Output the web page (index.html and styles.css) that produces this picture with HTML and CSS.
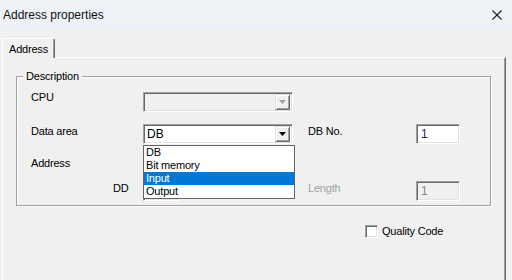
FILE: index.html
```html
<!DOCTYPE html>
<html lang="en">
<head>
    <meta charset="UTF-8">
    <title>Address properties</title>
    <link rel="stylesheet" href="styles.css">
</head>
<body>

    <div class="window">
        <div class="titlebar">
            <span class="title">Address properties</span>
            <svg class="close" width="10" height="10" viewBox="0 0 10 10">
                <path d="M0.5 0.5 L9.5 9.5 M9.5 0.5 L0.5 9.5" stroke="#1a1a1a" stroke-width="1.1" fill="none"/>
            </svg>
        </div>

        <div class="client">
            <div class="tabs">
                <div class="tab">Address</div>
            </div>

            <div class="tab-page">
                <div class="group">
                    <span class="group-caption">Description</span>

                    <div class="row row-cpu">
                        <span class="label">CPU</span>
                        <div class="combo combo-disabled">
                            <span class="combo-text"></span>
                            <span class="combo-btn">
                                <svg width="7" height="4" viewBox="0 0 7 4"><path d="M0 0 H7 L3.5 4 Z" fill="#a0a0a0"/></svg>
                            </span>
                        </div>
                    </div>

                    <div class="row row-area">
                        <span class="label">Data area</span>
                        <div class="combo">
                            <span class="combo-text">DB</span>
                            <span class="combo-btn">
                                <svg width="7" height="4" viewBox="0 0 7 4"><path d="M0 0 H7 L3.5 4 Z" fill="#000"/></svg>
                            </span>
                            <ul class="combo-list">
                                <li>DB</li>
                                <li>Bit memory</li>
                                <li class="selected">Input</li>
                                <li>Output</li>
                            </ul>
                        </div>
                        <span class="label label-right">DB No.</span>
                        <div class="edit">1</div>
                    </div>

                    <div class="row row-address">
                        <span class="label">Address</span>
                    </div>

                    <div class="row row-dd">
                        <span class="label label-dd">DD</span>
                        <div class="cell">
                            <div class="edit edit-address"></div>
                        </div>
                        <span class="label label-right label-disabled">Length</span>
                        <div class="edit edit-disabled">1</div>
                    </div>
                </div>

                <div class="check">
                    <span class="check-box"></span>
                    <span class="check-text">Quality Code</span>
                </div>
            </div>
        </div>
    </div>

</body>
</html>
```

FILE: styles.css
```css
* {
    box-sizing: border-box;
}

body {
    margin: 0;
    width: 512px;
    height: 280px;
    overflow: hidden;
    font-family: 'Liberation Sans', Arial, sans-serif;
    font-size: 11px;
    letter-spacing: -0.2px;
    color: #000;
    background: #f0f0f0;
}

.window {
    display: flex;
    flex-direction: column;
    height: 100%;
}

.titlebar {
    display: flex;
    align-items: center;
    justify-content: space-between;
    height: 29px;
    padding: 0 10px 0 3px;
    background: #eef2f6;
}

.title {
    font-size: 12px;
    letter-spacing: 0;
    color: #111;
}

.close {
    display: block;
    margin-top: 1px;
}

.client {
    flex: 1;
    display: flex;
    flex-direction: column;
    background: #f0f0f0;
}

.tabs {
    display: flex;
    padding: 9px 0 0 2px;
}

.tab {
    position: relative;
    z-index: 1;
    width: 53px;
    height: 20px;
    margin-bottom: -1px;
    padding: 4px 0 0 6px;
    line-height: 13px;
    background: #f0f0f0;
    border-top: 1px solid #fff;
    border-left: 1px solid #fff;
    border-right: 1px solid #696969;
    border-radius: 2px 2px 0 0;
    box-shadow: inset -1px 0 0 #a0a0a0;
}

.tab-page {
    flex: 1;
    margin-left: 2px;
    width: 504px;
    border-top: 1px solid #fff;
    border-left: 1px solid #fff;
    border-right: 1px solid #696969;
    box-shadow: inset -1px 0 0 #a0a0a0;
}

/* group box */
.group {
    position: relative;
    width: 475px;
    height: 130px;
    margin: 18px 0 0 13px;
    padding: 15px 0 0 14px;
    border: 1px solid #a0a0a0;
    box-shadow: inset 1px 1px 0 #fff, 1px 1px 0 #fff;
}

.group-caption {
    position: absolute;
    top: -8px;
    left: 6px;
    padding: 0 3px;
    line-height: 14px;
    background: #f0f0f0;
}

.row {
    display: flex;
    align-items: flex-start;
    height: 20px;
}

.row-area {
    margin-top: 12px;
}

.row-address {
    height: 13px;
    margin-top: 13px;
}

.row-dd {
    margin-top: 11px;
}

.label {
    width: 112px;
    line-height: 13px;
}

.row-cpu .label {
    margin-top: -1px;
}

.row-area .label,
.row-dd .label {
    margin-top: 1px;
}

.label-dd {
    padding-left: 82px;
}

.label-right {
    width: 108px;
    margin-left: 15px;
}

.label-disabled {
    color: #a0a0a0;
}

.cell {
    width: 150px;
}

/* sunken controls */
.combo,
.edit {
    height: 20px;
    border: 1px solid;
    border-color: #a0a0a0 #fff #fff #a0a0a0;
    box-shadow: inset 1px 1px 0 #696969, inset -1px -1px 0 #e3e3e3;
}

.combo {
    position: relative;
    display: flex;
    align-items: center;
    justify-content: space-between;
    width: 150px;
    padding: 2px 2px 2px 2px;
    background: #fff;
}

.combo-disabled {
    background: #f0f0f0;
}

.combo-text {
    padding-left: 1px;
    font-size: 12px;
    letter-spacing: 0;
    line-height: 14px;
}

.combo-btn {
    display: flex;
    align-items: center;
    justify-content: center;
    width: 15px;
    height: 16px;
    background: #f0f0f0;
    border: 1px solid;
    border-color: #e3e3e3 #696969 #696969 #e3e3e3;
    box-shadow: inset 1px 1px 0 #fff, inset -1px -1px 0 #a0a0a0;
}

.combo-btn svg {
    display: block;
}

.combo-list {
    position: absolute;
    z-index: 2;
    top: 20px;
    left: -1px;
    width: 152px;
    margin: 0;
    padding: 0;
    list-style: none;
    background: #fff;
    border: 1px solid #646464;
}

.combo-list li {
    height: 13px;
    padding-left: 2px;
    line-height: 13px;
    font-size: 11px;
}

.combo-list .selected {
    background: #0078d7;
    color: #fff;
}

.edit {
    width: 44px;
    padding: 2px 0 0 4px;
    font-size: 12px;
    letter-spacing: 0;
    line-height: 14px;
    color: #3c1450;
    background: #fff;
}

.edit-address {
    width: 37px;
}

.edit-disabled {
    background: #f0f0f0;
    color: #8e7c9c;
}

/* checkbox */
.check {
    display: flex;
    align-items: center;
    margin: 19px 0 0 362px;
    height: 13px;
}

.check-box {
    width: 13px;
    height: 13px;
    margin-right: 4px;
    background: #fff;
    border: 1px solid;
    border-color: #a0a0a0 #fff #fff #a0a0a0;
    box-shadow: inset 1px 1px 0 #696969, inset -1px -1px 0 #e3e3e3;
}

.check-text {
    line-height: 13px;
}
```
